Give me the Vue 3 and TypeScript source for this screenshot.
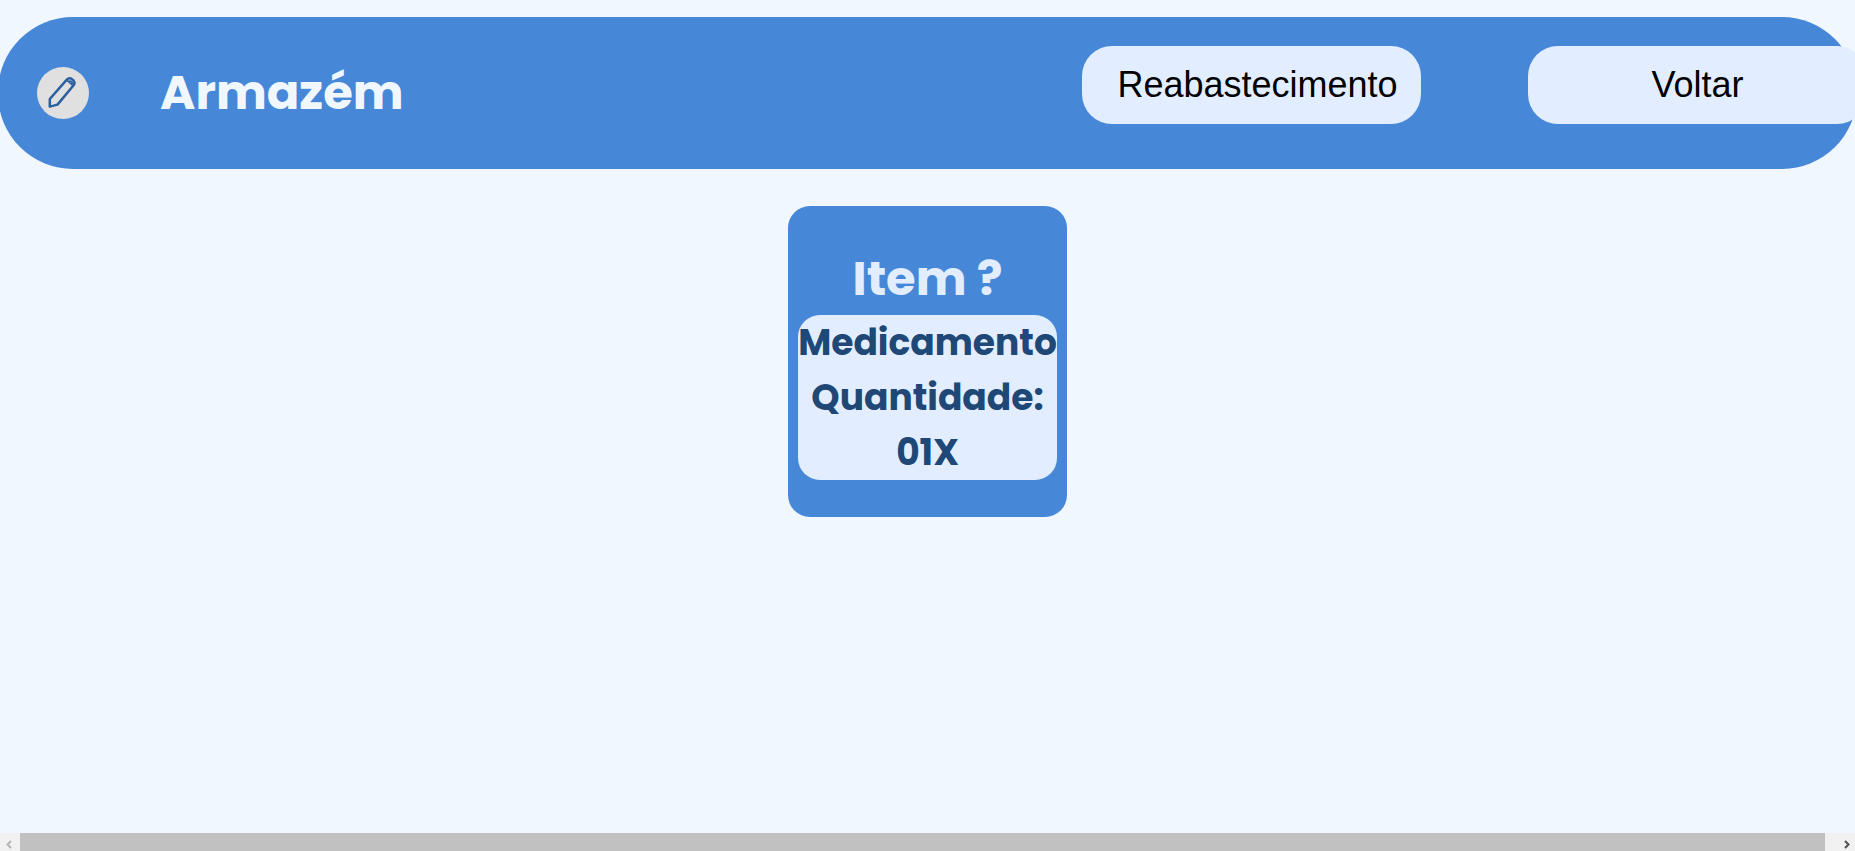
<script setup lang="ts">
interface StockItem {
  title: string
  name: string
  quantity: string
}

const items: StockItem[] = [{ title: 'Item ?', name: 'Medicamento', quantity: '01X' }]
</script>

<template>
  <div class="page">
    <header class="bar">
      <button class="edit" type="button" aria-label="Editar">
        <svg viewBox="0 0 52 52" aria-hidden="true">
          <path d="M12.8 39.6V32L29.8 12.6Q31.8 10.4 34.2 11.6L36.5 13.5Q38.3 15.5 36.8 18L20.5 37.6Z" />
          <path class="ferrule" d="M29.5 13L36.3 18.8M31.7 14.2Q34.5 13.4 35.8 16.8" />
        </svg>
      </button>
      <h1 class="title">Armazém</h1>
      <nav class="actions">
        <button class="action restock" type="button">Reabastecimento</button>
        <button class="action" type="button">Voltar</button>
      </nav>
    </header>

    <main class="stock">
      <article v-for="item in items" :key="item.title" class="card">
        <h2 class="card-title">{{ item.title }}</h2>
        <div class="details">
          <p>{{ item.name }}</p>
          <p>Quantidade:</p>
          <p>{{ item.quantity }}</p>
        </div>
      </article>
    </main>

    <div class="scroller">
      <button class="arrow" type="button" aria-label="Rolar para a esquerda" disabled>
        <svg viewBox="0 0 20 18" aria-hidden="true"><path d="M11 8L7.5 11.5L11 15" /></svg>
      </button>
      <div class="thumb"></div>
      <div class="track"></div>
      <button class="arrow" type="button" aria-label="Rolar para a direita">
        <svg viewBox="0 0 20 18" aria-hidden="true"><path d="M10 8L13.5 11.5L10 15" /></svg>
      </button>
    </div>
  </div>
</template>

<style>
body {
  margin: 0;
  background: #f0f7ff;
}
</style>

<style scoped>
.page {
  display: flex;
  flex-direction: column;
  min-height: 100vh;
  overflow: hidden;
  font-family: Poppins, Inter, sans-serif;
}

button {
  border: 0;
  padding: 0;
}

.bar {
  display: flex;
  align-items: center;
  box-sizing: border-box;
  min-height: 152px;
  margin: 17px -2px 0;
  padding-left: 39px;
  border-radius: 75px;
  background: #4687d7;
}

.edit {
  flex: none;
  width: 52px;
  height: 52px;
  border-radius: 50%;
  background: #e0e0e0;
}

.edit svg {
  display: block;
  fill: none;
  stroke: #2a609f;
  stroke-width: 2.5;
  stroke-linejoin: round;
}

.edit .ferrule {
  stroke-width: 1.6;
}

.title {
  margin: 0 0 0 71px;
  color: #f0f7ff;
  font-size: 48px;
  font-weight: 700;
  line-height: 72px;
}

.actions {
  display: flex;
  gap: 107px;
  margin: 0 -10px 16px auto;
}

.action {
  box-sizing: border-box;
  width: 339px;
  height: 78px;
  border-radius: 30px;
  background: #e2eeff;
  color: #000;
  font-family: "Liberation Sans", Arial, sans-serif;
  font-size: 36px;
}

.restock {
  padding-left: 12px;
}

.stock {
  display: flex;
  flex: 1;
  align-items: flex-start;
  justify-content: center;
  padding: 37px 0;
}

.card {
  box-sizing: border-box;
  width: 279px;
  padding: 37px 10px;
  border-radius: 22px;
  background: #4687d7;
  text-align: center;
}

.card-title {
  margin: 0;
  color: #e2eeff;
  font-size: 48px;
  font-weight: 700;
  line-height: 72px;
}

.details {
  border-radius: 22px;
  background: #e2eeff;
  color: #204877;
  font-size: 36px;
  font-weight: 700;
  line-height: 55px;
}

.details p {
  margin: 0;
}

.scroller {
  display: flex;
  height: 18px;
  background: #f1f1f1;
}

.arrow {
  width: 20px;
  height: 18px;
  background: #f1f1f1;
}

.arrow svg {
  display: block;
  fill: none;
  stroke: #505050;
  stroke-width: 2;
}

.arrow:disabled svg {
  stroke: #b5b5b5;
}

.thumb {
  flex: 1;
  background: #c1c1c1;
}

.track {
  width: 10px;
}
</style>
